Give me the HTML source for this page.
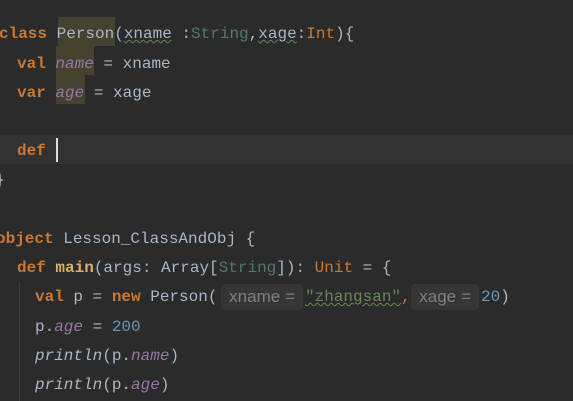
<!DOCTYPE html>
<html><head><meta charset="utf-8"><style>
html,body{margin:0;padding:0}
body{width:573px;height:401px;background:#2b2b2b;position:relative;overflow:hidden;font-family:"Liberation Mono",monospace;font-size:16px;color:#a9b7c6}
.l{position:absolute;white-space:pre;line-height:20px;height:20px}
.k{color:#cc7832;font-weight:bold}
.o{color:#cc7832}
.t{color:#507874}
.p{color:#9876aa;font-style:italic}
.i{font-style:italic}
.n{color:#6897bb}
.s{color:#6a8759;text-decoration:underline wavy #6a8759;text-decoration-thickness:1px}
.w{text-decoration:underline wavy #6a8759;text-decoration-thickness:1px}
.h{display:inline-block;background:#363636;color:#808080;font-family:"Liberation Sans",sans-serif;font-size:17px;border-radius:4px;text-align:center;height:26px;line-height:26px}
.bg{position:absolute;background:#45432f}
</style></head><body>
<div style="position:absolute;left:0;top:135px;width:573px;height:29px;background:#323232"></div>
<div class="bg" style="left:58px;top:17px;width:57px;height:29px"></div>
<div class="bg" style="left:56px;top:46px;width:38px;height:29px"></div>
<div class="bg" style="left:56px;top:75px;width:29px;height:29px"></div>
<div style="position:absolute;left:19px;top:282px;width:1px;height:119px;background:#3c3c3c"></div>
<div class="l" style="left:-1px;top:24px"><span class="k">class</span> Person(<span class="w">xname</span> :<span class="t">String</span>,<span class="w">xage</span>:<span class="o">Int</span>){</div>
<div class="l" style="left:17px;top:54px"><span class="k">val</span> <span class="p">name</span> = xname</div>
<div class="l" style="left:17px;top:83px"><span class="k">var</span> <span class="p">age</span> = xage</div>
<div class="l" style="left:17px;top:141px"><span class="k">def</span></div>
<div style="position:absolute;left:56px;top:138px;width:2px;height:24px;background:#ddd"></div>
<div class="l" style="left:-5px;top:170px">}</div>
<div class="l" style="left:-4px;top:229px"><span class="k">object</span> Lesson_ClassAndObj {</div>
<div class="l" style="left:17px;top:258px"><span class="k">def</span> <span style="color:#d6b26e;font-weight:bold">main</span>(args: Array[<span class="t">String</span>]): <span class="o">Unit</span> = {</div>
<div class="l" style="left:35px;top:287px"><span class="k">val</span> p = <span class="k">new</span> Person(</div>
<div class="h" style="position:absolute;left:221px;top:284px;width:82px">xname =</div>
<div class="l" style="left:305px;top:287px"><span class="s">"zhangsan"</span><span class="o">,</span></div>
<div class="h" style="position:absolute;left:411px;top:284px;width:68px">xage =</div>
<div class="l" style="left:481px;top:287px"><span class="n">20</span>)</div>
<div class="l" style="left:35px;top:317px">p.<span class="p">age</span> = <span class="n">200</span></div>
<div class="l" style="left:35px;top:346px"><span class="i">println</span>(p.<span class="p">name</span>)</div>
<div class="l" style="left:35px;top:375px"><span class="i">println</span>(p.<span class="p">age</span>)</div>
</body></html>
